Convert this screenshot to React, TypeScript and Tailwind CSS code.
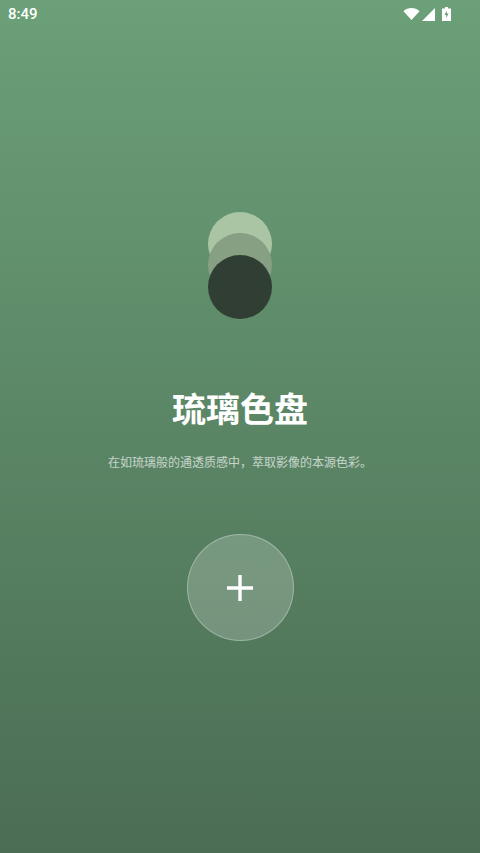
export default function App() {
  return (
    <div
      className="flex h-[853px] w-[480px] flex-col items-center overflow-hidden bg-gradient-to-b from-[#6ba078] to-[#4b6d54]"
      style={{ fontFamily: '"Noto Sans CJK SC", "Noto Sans", sans-serif' }}
    >
      {/* Status bar */}
      <div className="flex h-[28px] w-full items-center justify-between pl-[8px] pr-[29px] text-white">
        <span className="text-[15px] leading-none font-medium" style={{ fontFamily: 'Roboto, sans-serif' }}>8:49</span>
        <div className="flex items-center">
          <svg width="17" height="12" viewBox="0 0 16 12" fill="currentColor">
            <path d="M0 3.200C2.200 1.200 5 0 8 0s5.800 1.200 8 3.200L8 12z" />
          </svg>
          <svg width="13" height="13" viewBox="0 0 13 13" fill="currentColor" className="ml-[2px]">
            <path d="M13 0v13H0z" />
          </svg>
          <svg width="9" height="14" viewBox="0 0 9 14" className="ml-[7px]">
            <path fill="currentColor" fillRule="evenodd" d="M3 0h3v1.500h3V14H0V1.500h3zM4.800 3.500 2.500 8h1.700v3l2.300-4.500H4.800z" />
          </svg>
        </div>
      </div>

      {/* Logo */}
      <div className="mt-[184px] flex flex-col items-center">
        <div className="h-16 w-16 rounded-full bg-[#aac5a3]" />
        <div className="-mt-[43px] h-16 w-16 rounded-full bg-[#87a084]" />
        <div className="-mt-[42px] h-16 w-16 rounded-full bg-[#303e34]" />
      </div>

      <h1 className="mt-[65px] text-[34px] leading-[48px] font-bold text-white">琉璃色盘</h1>
      <p className="mt-[21px] text-[12px] leading-[18px] text-white/65">在如琉璃般的通透质感中，萃取影像的本源色彩。</p>

      {/* Add button */}
      <button className="mt-[63px] flex h-[107px] w-[107px] items-center justify-center rounded-full border-[1.5px] border-white/30 bg-white/20 text-white">
        <svg width="26" height="26" viewBox="0 0 26 26" fill="currentColor">
          <path d="M11.300 0h3.400v11.300H26v3.400H14.700V26h-3.400V14.700H0v-3.400h11.300z" />
        </svg>
      </button>
    </div>
  );
}
